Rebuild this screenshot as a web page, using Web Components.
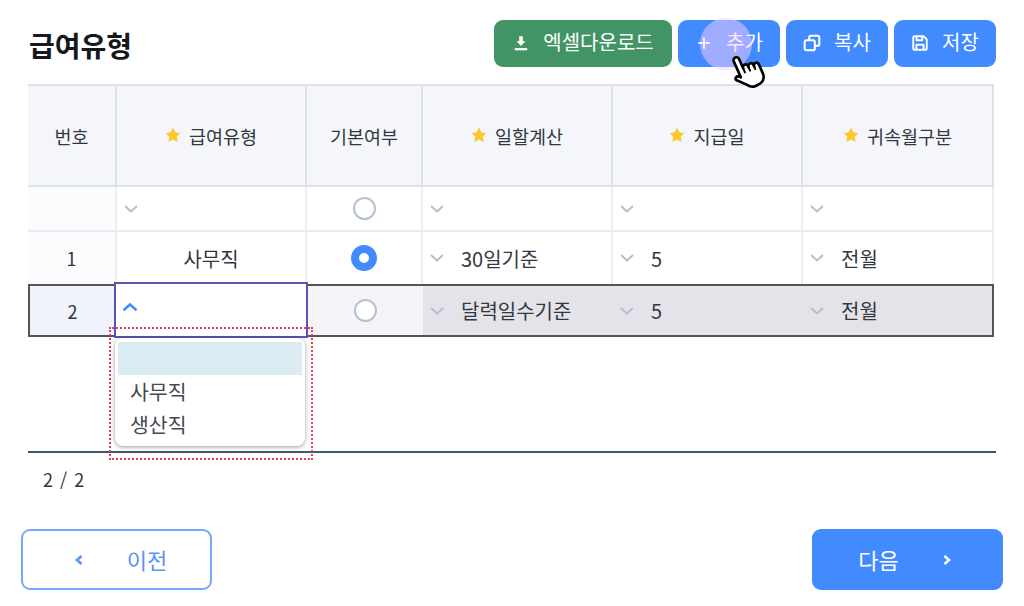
<!DOCTYPE html>
<html lang="ko">
<head>
<meta charset="utf-8">
<title>급여유형</title>
<style>
  html, body { margin: 0; background: #fff; }
  body { font-family: "Noto Sans CJK KR", "Noto Sans", sans-serif; }
</style>
</head>
<body>
<pay-page>
  <page-head slot="head" title="급여유형">
    <tool-button color="green" icon="download" wide>엑셀다운로드</tool-button>
    <tool-button icon="plus">추가</tool-button>
    <tool-button icon="copy">복사</tool-button>
    <tool-button icon="save">저장</tool-button>
  </page-head>

  <data-grid slot="grid">
    <grid-row kind="head">
      <grid-cell head>번호</grid-cell>
      <grid-cell head star>급여유형</grid-cell>
      <grid-cell head>기본여부</grid-cell>
      <grid-cell head star>일할계산</grid-cell>
      <grid-cell head star>지급일</grid-cell>
      <grid-cell head star>귀속월구분</grid-cell>
    </grid-row>
    <grid-row kind="filter">
      <grid-cell tone="num"></grid-cell>
      <grid-cell select></grid-cell>
      <grid-cell><radio-dot></radio-dot></grid-cell>
      <grid-cell select></grid-cell>
      <grid-cell select></grid-cell>
      <grid-cell select></grid-cell>
    </grid-row>
    <grid-row kind="row">
      <grid-cell tone="num" small>1</grid-cell>
      <grid-cell>사무직</grid-cell>
      <grid-cell><radio-dot checked></radio-dot></grid-cell>
      <grid-cell select>30일기준</grid-cell>
      <grid-cell select>5</grid-cell>
      <grid-cell select>전월</grid-cell>
    </grid-row>
    <grid-row kind="active">
      <grid-cell tone="active-num" small>2</grid-cell>
      <grid-cell editing select></grid-cell>
      <grid-cell tone="active-radio"><radio-dot></radio-dot></grid-cell>
      <grid-cell tone="active" select>달력일수기준</grid-cell>
      <grid-cell tone="active" select>5</grid-cell>
      <grid-cell tone="active" select>전월</grid-cell>
    </grid-row>
    <combo-menu slot="over">
      <combo-item selected></combo-item>
      <combo-item>사무직</combo-item>
      <combo-item>생산직</combo-item>
    </combo-menu>
  </data-grid>

  <span slot="status">2 / 2</span>

  <nav-button slot="prev" dir="prev">이전</nav-button>
  <nav-button slot="next" dir="next">다음</nav-button>
</pay-page>
<click-cursor></click-cursor>

<script>
const ICONS = {
  download: '<path d="M6.400 2h3.200v4.500H12L8 10.600 4 6.500h2.400z" fill="#fff"/><path d="M2.500 13.500h11" stroke="#fff" stroke-width="2"/>',
  plus: '<path d="M8 3v10M3 8h10" stroke="#fff" stroke-width="1.800" fill="none"/>',
  copy: '<g fill="none" stroke="#fff" stroke-width="1.800" stroke-linejoin="round"><rect x="1.500" y="5.500" width="9" height="9" rx="1.500"/><path d="M5.500 5.500V3a1.500 1.500 0 0 1 1.500-1.500h6A1.500 1.500 0 0 1 14.500 3v6a1.500 1.500 0 0 1-1.500 1.500h-2.500"/></g>',
  save: '<g fill="none" stroke="#fff" stroke-width="1.700" stroke-linejoin="round"><path d="M2 3.200A1.200 1.200 0 0 1 3.200 2h8L14 4.800v8A1.200 1.200 0 0 1 12.800 14H3.200A1.200 1.200 0 0 1 2 12.800z"/><path d="M5 2.200v3.300h5V2.200M4.800 14V9.500h6.400V14"/></g>'
}

class PayPage extends HTMLElement {
  constructor() {
    super()
    this.attachShadow({ mode: 'open' }).innerHTML = `
      <style>
        :host { display: block; width: 1024px; height: 606px; overflow: hidden; color: #2b2f36; }
        .top { padding: 0 28px; }
        .status { height: 76px; padding: 14px 15px 0; box-sizing: border-box; font-size: 18px; line-height: 24px; letter-spacing: 1px; color: #33383f; }
        .nav { display: flex; justify-content: space-between; padding: 0 21px; }
      </style>
      <div class="top">
        <slot name="head"></slot>
        <slot name="grid"></slot>
        <div class="status"><slot name="status"></slot></div>
      </div>
      <div class="nav"><slot name="prev"></slot><slot name="next"></slot></div>
    `
  }
}

class PageHead extends HTMLElement {
  constructor() {
    super()
    this.attachShadow({ mode: 'open' }).innerHTML = `
      <style>
        :host { display: flex; height: 84px; box-sizing: border-box; padding-top: 20px; justify-content: space-between; align-items: flex-start; }
        h1 { margin: 0; font-size: 28px; line-height: 50px; font-weight: 700; color: #16181c; padding-left: 1px; }
        .tools { display: flex; gap: 6px; }
      </style>
      <h1>${this.getAttribute('title')}</h1>
      <div class="tools"><slot></slot></div>
    `
  }
}

class ToolButton extends HTMLElement {
  constructor() {
    super()
    const icon = ICONS[this.getAttribute('icon')]
    this.attachShadow({ mode: 'open' }).innerHTML = `
      <style>
        :host { display: flex; align-items: center; justify-content: center; gap: 13px; width: 102px; height: 47px; box-sizing: border-box; border-radius: 9px; background: #418bff; color: #fff; font-size: 20px; padding-bottom: 4px; }
        :host([color="green"]) { background: #439464; }
        :host([wide]) { width: 178px; }
        svg { width: 18px; height: 18px; display: block; flex: none; margin-top: 3px; }
      </style>
      <svg viewBox="0 0 16 16">${icon}</svg>
      <span><slot></slot></span>
    `
  }
}

class DataGrid extends HTMLElement {
  constructor() {
    super()
    this.attachShadow({ mode: 'open' }).innerHTML = `
      <style>
        :host { display: block; position: relative; height: 369px; box-sizing: border-box; border-bottom: 2px solid #42566b; }
        .over { position: absolute; left: 81px; top: 243px; z-index: 3; }
      </style>
      <slot></slot>
      <div class="over"><slot name="over"></slot></div>
    `
  }
}

class GridRow extends HTMLElement {
  constructor() {
    super()
    this.attachShadow({ mode: 'open' }).innerHTML = `
      <style>
        :host { display: grid; grid-template-columns: 89px 190px 116px 190px 190px 191px; width: 966px; box-sizing: border-box; position: relative; }
        :host([kind="head"]) { height: 103px; border-top: 2px solid #dde2ea; border-bottom: 2px solid #dde2ea; }
        :host([kind="filter"]) { height: 45px; border-bottom: 2px solid #e8ebf0; }
        :host([kind="row"]) { height: 52px; }
        :host([kind="active"]) { height: 53px; outline: 2px solid #555; outline-offset: -2px; }
      </style>
      <slot></slot>
    `
  }
}

class GridCell extends HTMLElement {
  constructor() {
    super()
    const star = this.hasAttribute('head') && this.hasAttribute('star')
    const select = this.hasAttribute('select')
    const up = this.hasAttribute('editing')
    this.attachShadow({ mode: 'open' }).innerHTML = `
      <style>
        :host { display: flex; align-items: center; justify-content: center; gap: 8px; box-sizing: border-box; min-width: 0; font-size: 20px; color: #33383f; background: #fff; border-right: 2px solid #eceef2; }
        :host([small]) { font-size: 18px; }
        :host([tone="num"]) { background: #fbfcfe; }
        :host([head]) { font-size: 18.500px; background: #f4f6fb; border-right-color: #dde2ea; }
        :host([select]) { justify-content: flex-start; padding-left: 6px; gap: 16px; }
        :host([tone="active-num"]) { background: #eff3fb; border-right: 0; }
        :host([tone="active-radio"]) { background: #f4f4f9; border-right: 0; }
        :host([tone="active"]) { background: #e3e3e9; border-right: 0; }
        :host([editing]) { margin: -2px 0 -1px -3px; width: 194px; border: 2px solid #5a55b5; position: relative; z-index: 2; background: #fff; padding: 0 0 6px 6px; }
        svg.chev { width: 16px; height: 10px; flex: none; display: block; }
        svg.star { width: 16px; height: 16px; flex: none; display: block; margin-top: -2px; }
      </style>
      ${star ? '<svg class="star" viewBox="0 0 16 16"><path d="M8 1.500l2 4.300 4.600.6-3.400 3.200.9 4.700L8 12 3.900 14.300l.9-4.700L1.400 6.400 6 5.800z" fill="#fdc72d" stroke="#fdc72d" stroke-linejoin="round"/></svg>' : ''}
      ${select ? `<svg class="chev" viewBox="0 0 16 10"><path d="${up ? 'M1.500 8.200 8 2.500l6.500 5.700' : 'M2 2l6 5.500L14 2'}" fill="none" stroke="${up ? '#418bff' : '#b3bdcc'}" stroke-width="${up ? 2.600 : 1.800}"/></svg>` : ''}
      <span><slot></slot></span>
    `
  }
}

class RadioDot extends HTMLElement {
  constructor() {
    super()
    this.attachShadow({ mode: 'open' }).innerHTML = `
      <style>
        :host { display: block; width: 23px; height: 23px; box-sizing: border-box; border: 2px solid #b6c2d3; border-radius: 50%; background: #fff; }
        :host([checked]) { width: 26px; height: 26px; border: 8px solid #418bff; }
      </style>
    `
  }
}

class ComboMenu extends HTMLElement {
  constructor() {
    super()
    this.attachShadow({ mode: 'open' }).innerHTML = `
      <style>
        :host { display: block; box-sizing: border-box; width: 204px; height: 133px; border: 2px dotted #f03a55; padding: 9px 5px 0 4px; }
        .menu { box-sizing: border-box; height: 108px; width: 190px; padding: 4px 3px; background: #fff; border-radius: 8px; box-shadow: 0 1px 4px rgba(0,0,0,.4); }
      </style>
      <div class="menu"><slot></slot></div>
    `
  }
}

class ComboItem extends HTMLElement {
  constructor() {
    super()
    this.attachShadow({ mode: 'open' }).innerHTML = `
      <style>
        :host { display: block; height: 33px; box-sizing: border-box; padding-left: 12px; font-size: 20.500px; line-height: 33px; color: #45494f; }
        :host([selected]) { background: #daecf2; }
      </style>
      <slot></slot>
    `
  }
}

class NavButton extends HTMLElement {
  constructor() {
    super()
    const prev = this.getAttribute('dir') === 'prev'
    const arrow = `<svg viewBox="0 0 10 14"><path d="${prev ? 'M7.500 3 3 7l4.500 4' : 'M2.500 3 7 7l-4.500 4'}" fill="none" stroke="currentColor" stroke-width="2.600"/></svg>`
    this.attachShadow({ mode: 'open' }).innerHTML = `
      <style>
        :host { display: flex; align-items: center; justify-content: center; gap: 43px; width: 191px; height: 61px; box-sizing: border-box; border-radius: 9px; font-size: 22px; padding-bottom: 2px; }
        :host([dir="prev"]) { background: #fff; border: 2px solid #76a9fb; color: #5b93f8; padding-left: 8px; }
        :host([dir="next"]) { background: #418bff; color: #fff; padding-right: 5px; }
        svg { width: 10px; height: 14px; display: block; flex: none; margin-top: 2px; }
      </style>
      ${prev ? arrow : ''}<span><slot></slot></span>${prev ? '' : arrow}
    `
  }
}

class ClickCursor extends HTMLElement {
  constructor() {
    super()
    this.attachShadow({ mode: 'open' }).innerHTML = `
      <style>
        :host { display: block; position: absolute; left: 0; top: 0; width: 0; height: 0; }
        .halo { position: absolute; left: 700px; top: 18px; width: 52px; height: 52px; border-radius: 50%; background: rgba(255,205,255,.5); }
        svg { position: absolute; left: 724px; top: 47px; width: 47px; height: 47px; }
      </style>
      <div class="halo"></div>
      <svg viewBox="0 0 42 42">
        <g transform="translate(6 5) rotate(-24 14 16)" fill="#fff" stroke="#000" stroke-width="2.400" stroke-linejoin="round" stroke-linecap="round">
          <path d="M7 4a2.600 2.600 0 0 1 5.200 0v9a2.400 2.400 0 0 1 4.800 0v1a2.400 2.400 0 0 1 4.800 0v1.500a2.300 2.300 0 0 1 4.600 0V24c0 5-3.500 8-8.500 8h-2c-3 0-5-1.500-6.500-4L2.500 20.500c-1.300-2 1.200-4 3-2.500L7 19.500z"/>
          <path d="M12.200 13v4M17 14v3.500M21.800 15.500v2.500" fill="none" stroke-width="1.800"/>
        </g>
      </svg>
    `
  }
}

customElements.define('pay-page', PayPage)
customElements.define('page-head', PageHead)
customElements.define('tool-button', ToolButton)
customElements.define('data-grid', DataGrid)
customElements.define('grid-row', GridRow)
customElements.define('grid-cell', GridCell)
customElements.define('radio-dot', RadioDot)
customElements.define('combo-menu', ComboMenu)
customElements.define('combo-item', ComboItem)
customElements.define('nav-button', NavButton)
customElements.define('click-cursor', ClickCursor)
</script>
</body>
</html>
